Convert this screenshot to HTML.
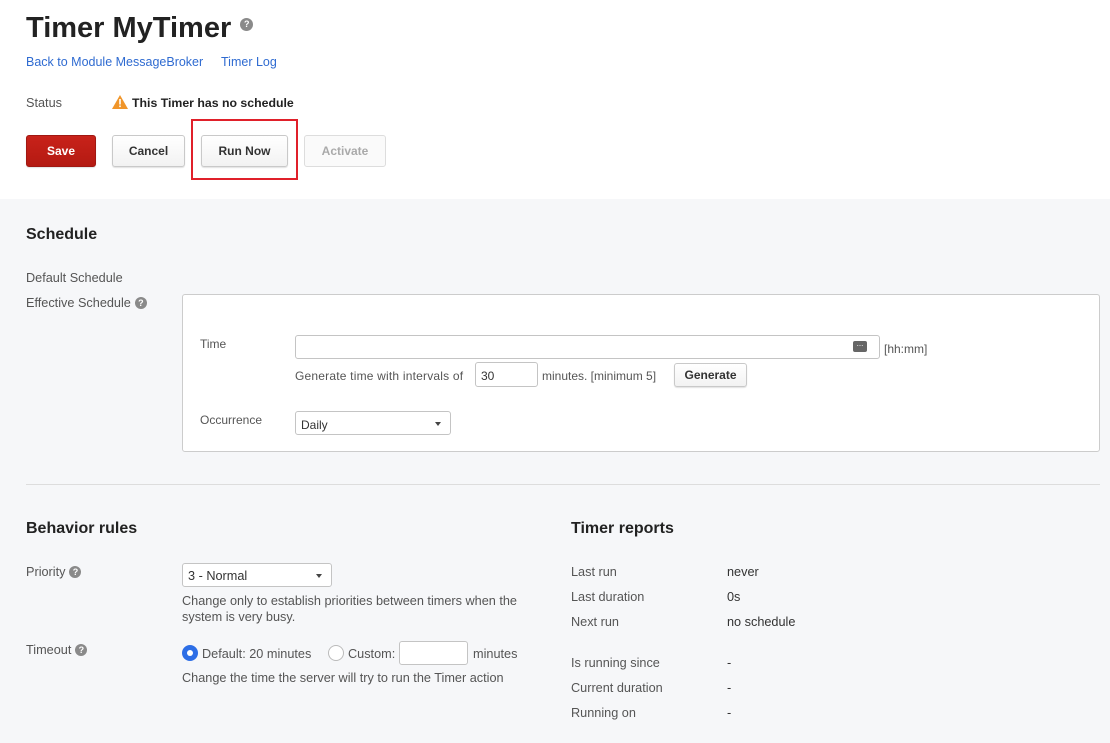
<!DOCTYPE html>
<html><head><meta charset="utf-8"><style>
*{box-sizing:border-box;margin:0;padding:0}
body{width:1110px;height:743px;overflow:hidden;font-family:"Liberation Sans",sans-serif;font-size:12.7px;color:#333;background:#fff;position:relative}
.a{position:absolute;white-space:nowrap}
.gray{position:absolute;left:0;top:199px;width:1110px;height:544px;background:#f6f7f9}
.lbl{color:#555}
.link{color:#2f6bd1;font-size:12.5px}
.btn{position:absolute;height:32px;border:1px solid #c9c9c9;border-radius:3px;background:linear-gradient(#fff,#f2f2f2);font-weight:bold;font-size:12px;color:#333;text-align:center;line-height:30px;box-shadow:0 1px 1px rgba(0,0,0,.12)}
.q{display:inline-block;width:12px;height:12px;border-radius:50%;background:#8a8a8a;color:#fff;font-size:9px;font-weight:bold;text-align:center;line-height:12px;vertical-align:1px;margin-left:4px}
.in{position:absolute;background:#fff;border:1px solid #c4c4c4;border-radius:3px}
h2{position:absolute;font-size:16px;font-weight:bold;color:#222;white-space:nowrap}
.caret{position:absolute;right:9px;top:10px;border:3px solid transparent;border-top:4px solid #444;border-bottom:0}
.box{font-size:12px}
</style></head><body>
<div class="a" style="left:26px;top:12px;font-size:29px;font-weight:bold;color:#222">Timer MyTimer<span class="q" style="width:13px;height:13px;line-height:13px;margin-left:9px;vertical-align:10px">?</span></div>
<div class="a link" style="left:26px;top:55px">Back to Module MessageBroker</div>
<div class="a link" style="left:221px;top:55px">Timer Log</div>
<div class="a lbl" style="left:26px;top:96px">Status</div>
<svg class="a" style="left:112px;top:95px" width="16" height="14" viewBox="0 0 16 14"><path d="M8 0L16 14H0Z" fill="#f0952a"/><rect x="7.2" y="4" width="1.6" height="5.5" fill="#fff"/><rect x="7.2" y="10.5" width="1.6" height="1.6" fill="#fff"/></svg>
<div class="a" style="left:132px;top:96px;font-weight:bold;color:#222;font-size:12.3px">This Timer has no schedule</div>
<div class="btn" style="left:26px;top:135px;width:70px;background:linear-gradient(#c8221a,#b41a12);border-color:#a01812;color:#fff">Save</div>
<div class="btn" style="left:112px;top:135px;width:73px">Cancel</div>
<div class="a" style="left:191px;top:119px;width:107px;height:61px;border:2px solid #e0202a"></div>
<div class="btn" style="left:201px;top:135px;width:87px">Run Now</div>
<div class="btn" style="left:304px;top:135px;width:82px;color:#aaa;background:#fafafa;border-color:#ddd;box-shadow:none">Activate</div>

<div class="gray"></div>
<h2 style="left:26px;top:226px">Schedule</h2>
<div class="a lbl" style="left:26px;top:271px">Default Schedule</div>
<div class="a lbl" style="left:26px;top:296px">Effective Schedule<span class="q">?</span></div>
<div class="a" style="left:182px;top:294px;width:918px;height:158px;background:#fff;border:1px solid #ccc;border-radius:3px"></div>
<div class="box">
<div class="a lbl" style="left:200px;top:337px">Time</div>
<div class="in" style="left:295px;top:335px;width:585px;height:24px"><div style="position:absolute;right:12px;top:5px;width:14px;height:11px;background:#666;border-radius:2px;color:#fff;font-size:8px;line-height:6px;text-align:center">...</div></div>
<div class="a lbl" style="left:884px;top:342px">[hh:mm]</div>
<div class="a lbl" style="left:295px;top:369px;letter-spacing:0.2px">Generate time with intervals of</div>
<div class="in" style="left:475px;top:362px;width:63px;height:25px"><span style="position:absolute;left:5px;top:6px">30</span></div>
<div class="a lbl" style="left:542px;top:369px">minutes. [minimum 5]</div>
<div class="btn" style="left:674px;top:363px;width:73px;height:24px;line-height:22px">Generate</div>
<div class="a lbl" style="left:200px;top:413px">Occurrence</div>
<div class="in" style="left:295px;top:411px;width:156px;height:24px"><span style="position:absolute;left:5px;top:6px">Daily</span><div class="caret"></div></div>
</div>
<div class="a" style="left:26px;top:484px;width:1074px;height:1px;background:#ddd"></div>

<h2 style="left:26px;top:520px">Behavior rules</h2>
<h2 style="left:571px;top:520px">Timer reports</h2>
<div class="a lbl" style="left:26px;top:565px">Priority<span class="q">?</span></div>
<div class="in" style="left:182px;top:563px;width:150px;height:24px"><span style="position:absolute;left:5px;top:5px">3 - Normal</span><div class="caret"></div></div>
<div class="a lbl" style="left:182px;top:593px;line-height:16px">Change only to establish priorities between timers when the<br>system is very busy.</div>
<div class="a lbl" style="left:26px;top:643px">Timeout<span class="q">?</span></div>
<div class="a" style="left:182px;top:645px;width:16px;height:16px;border-radius:50%;background:#2d6ee6"><div style="position:absolute;left:5px;top:5px;width:6px;height:6px;border-radius:50%;background:#fff"></div></div>
<div class="a lbl" style="left:202px;top:647px">Default: 20 minutes</div>
<div class="a" style="left:328px;top:645px;width:16px;height:16px;border-radius:50%;background:#fff;border:1px solid #bbb"></div>
<div class="a lbl" style="left:348px;top:647px">Custom:</div>
<div class="in" style="left:399px;top:641px;width:69px;height:24px"></div>
<div class="a lbl" style="left:473px;top:647px">minutes</div>
<div class="a lbl" style="left:182px;top:671px">Change the time the server will try to run the Timer action</div>

<div class="a lbl" style="left:571px;top:565px">Last run</div><div class="a" style="left:727px;top:565px">never</div>
<div class="a lbl" style="left:571px;top:590px">Last duration</div><div class="a" style="left:727px;top:590px">0s</div>
<div class="a lbl" style="left:571px;top:615px">Next run</div><div class="a" style="left:727px;top:615px">no schedule</div>
<div class="a lbl" style="left:571px;top:656px">Is running since</div><div class="a" style="left:727px;top:656px">-</div>
<div class="a lbl" style="left:571px;top:681px">Current duration</div><div class="a" style="left:727px;top:681px">-</div>
<div class="a lbl" style="left:571px;top:706px">Running on</div><div class="a" style="left:727px;top:706px">-</div>
</body></html>
